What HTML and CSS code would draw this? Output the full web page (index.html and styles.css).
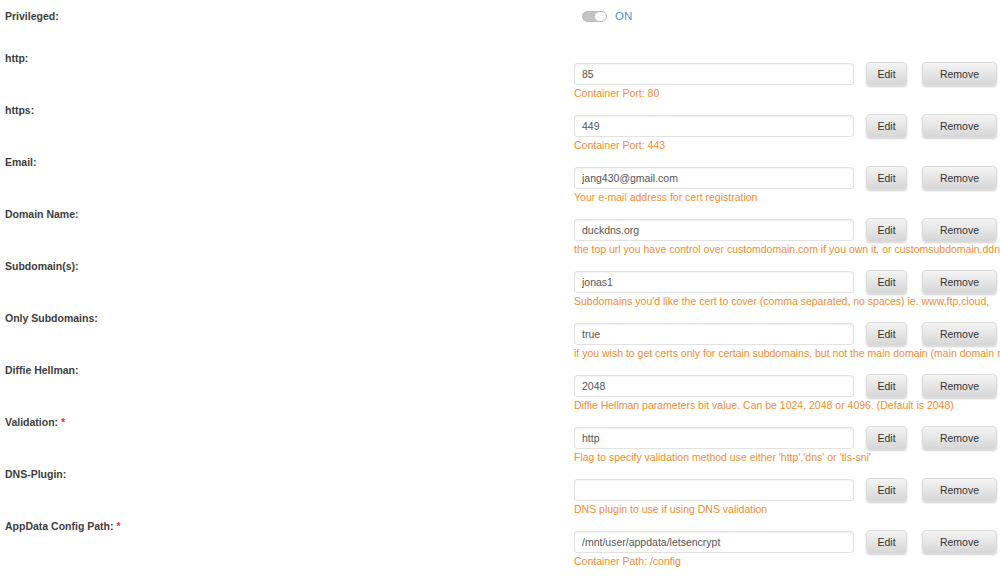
FILE: index.html
```html
<!DOCTYPE html>
<html lang="en">
<head>
  <meta charset="UTF-8">
  <meta name="viewport" content="width=device-width, initial-scale=1.0">
  <title>Container Settings</title>
  <link rel="stylesheet" href="styles.css">
</head>
<body>
  <div class="settings">
    <div class="row row-first">
      <div class="label">Privileged:</div>
      <div class="toggle-wrap">
        <span class="switch"><span class="knob"></span></span>
        <span class="on">ON</span>
      </div>
    </div>

    <div class="row">
      <div class="label">http:</div>
      <div class="field">
        <div class="line">
          <input type="text" value="85">
          <button class="edit">Edit</button>
          <button class="remove">Remove</button>
        </div>
        <div class="hint">Container Port: 80</div>
      </div>
    </div>

    <div class="row">
      <div class="label">https:</div>
      <div class="field">
        <div class="line">
          <input type="text" value="449">
          <button class="edit">Edit</button>
          <button class="remove">Remove</button>
        </div>
        <div class="hint">Container Port: 443</div>
      </div>
    </div>

    <div class="row">
      <div class="label">Email:</div>
      <div class="field">
        <div class="line">
          <input type="text" value="jang430@gmail.com">
          <button class="edit">Edit</button>
          <button class="remove">Remove</button>
        </div>
        <div class="hint">Your e-mail address for cert registration</div>
      </div>
    </div>

    <div class="row">
      <div class="label">Domain Name:</div>
      <div class="field">
        <div class="line">
          <input type="text" value="duckdns.org">
          <button class="edit">Edit</button>
          <button class="remove">Remove</button>
        </div>
        <div class="hint">the top url you have control over customdomain.com if you own it, or customsubdomain.ddnsprovider.com if dynamic dns</div>
      </div>
    </div>

    <div class="row">
      <div class="label">Subdomain(s):</div>
      <div class="field">
        <div class="line">
          <input type="text" value="jonas1">
          <button class="edit">Edit</button>
          <button class="remove">Remove</button>
        </div>
        <div class="hint">Subdomains you'd like the cert to cover (comma separated, no spaces) ie. www,ftp,cloud,</div>
      </div>
    </div>

    <div class="row">
      <div class="label">Only Subdomains:</div>
      <div class="field">
        <div class="line">
          <input type="text" value="true">
          <button class="edit">Edit</button>
          <button class="remove">Remove</button>
        </div>
        <div class="hint">if you wish to get certs only for certain subdomains, but not the main domain (main domain may be hosted elsewhere)</div>
      </div>
    </div>

    <div class="row">
      <div class="label">Diffie Hellman:</div>
      <div class="field">
        <div class="line">
          <input type="text" value="2048">
          <button class="edit">Edit</button>
          <button class="remove">Remove</button>
        </div>
        <div class="hint">Diffie Hellman parameters bit value. Can be 1024, 2048 or 4096. (Default is 2048)</div>
      </div>
    </div>

    <div class="row">
      <div class="label">Validation: <span class="req">*</span></div>
      <div class="field">
        <div class="line">
          <input type="text" value="http">
          <button class="edit">Edit</button>
          <button class="remove">Remove</button>
        </div>
        <div class="hint">Flag to specify validation method use either 'http','dns' or 'tls-sni'</div>
      </div>
    </div>

    <div class="row">
      <div class="label">DNS-Plugin:</div>
      <div class="field">
        <div class="line">
          <input type="text" value="">
          <button class="edit">Edit</button>
          <button class="remove">Remove</button>
        </div>
        <div class="hint">DNS plugin to use if using DNS validation</div>
      </div>
    </div>

    <div class="row">
      <div class="label">AppData Config Path: <span class="req">*</span></div>
      <div class="field">
        <div class="line">
          <input type="text" value="/mnt/user/appdata/letsencrypt">
          <button class="edit">Edit</button>
          <button class="remove">Remove</button>
        </div>
        <div class="hint">Container Path: /config</div>
      </div>
    </div>
  </div>
</body>
</html>
```

FILE: styles.css
```css
body {
  margin: 0;
  padding: 0;
  background-color: #fff;
  color: #333;
  font-family: "Liberation Sans", Arial, sans-serif;
  font-size: 10.5px;
  overflow: hidden;
}

.settings {
  padding: 8px 0 0 5px;
  white-space: nowrap;
}

.row {
  display: flex;
  height: 52px;
}

.row-first {
  height: 42px;
}

.label {
  width: 569px;
  flex-shrink: 0;
  padding-top: 1px;
  line-height: 14px;
  font-weight: bold;
  color: #3d3d3d;
}

.req {
  color: #e53030;
}

.toggle-wrap {
  display: flex;
  align-items: center;
  height: 16px;
  padding-left: 8px;
}

.switch {
  position: relative;
  display: inline-block;
  width: 25px;
  height: 11px;
  border-radius: 6px;
  background: #c4c4c4;
  box-sizing: border-box;
  border: 1px solid #b8b8b8;
}

.knob {
  position: absolute;
  right: 0;
  top: 0;
  width: 11px;
  height: 9px;
  border-radius: 5px;
  background: #fff;
}

.on {
  margin-left: 8px;
  font-size: 11.5px;
  color: #3f93da;
}

.field {
  padding-top: 12px;
}

.line {
  display: flex;
  align-items: center;
  height: 24px;
}

input {
  width: 280px;
  height: 22px;
  box-sizing: border-box;
  padding: 0 7px;
  border: 1px solid #e2e2e2;
  border-radius: 3px;
  box-shadow: inset 0 1px 2px rgba(0, 0, 0, 0.05);
  font-family: inherit;
  font-size: 10.5px;
  color: #555;
  outline: none;
}

button {
  height: 24px;
  box-sizing: border-box;
  border: 1px solid #dcdcdc;
  border-radius: 4px;
  background: linear-gradient(#f4f4f4, #d6d6d6);
  box-shadow: 0 1px 2px rgba(0, 0, 0, 0.18);
  font-family: inherit;
  font-size: 10.5px;
  color: #333;
  padding: 0;
  cursor: pointer;
}

.edit {
  width: 41px;
  margin-left: 12px;
}

.remove {
  width: 75px;
  margin-left: 15px;
}

.hint {
  line-height: 14px;
  color: #f08d2e;
}
```
